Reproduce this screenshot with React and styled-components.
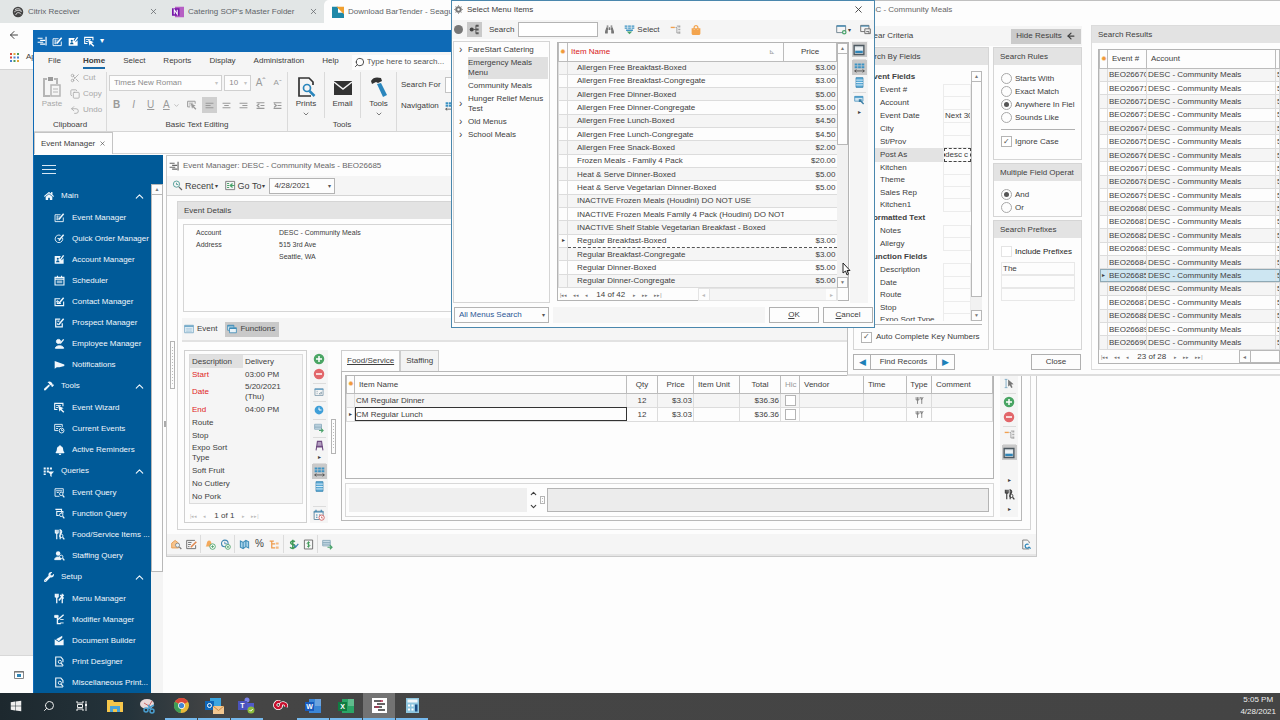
import React, { useState } from 'react';
import styled, { createGlobalStyle } from 'styled-components';
import { FaHome, FaHammer, FaWrench, FaBell, FaBinoculars, FaShoppingBag, FaWindows } from 'react-icons/fa';
import { Search, ArrowLeft, Undo2, Scissors, X, ChevronUp, ChevronDown, Copy } from 'lucide-react';

const FACE = '"Liberation Sans", Arial, sans-serif';
const SIZE = '8px';

/* ---------- data ---------- */

const navSections = [
  {
    title: 'Main',
    icon: 'home',
    items: [
      ['Event Manager', 'edit'],
      ['Quick Order Manager', 'quick'],
      ['Account Manager', 'account'],
      ['Scheduler', 'calendar'],
      ['Contact Manager', 'contact'],
      ['Prospect Manager', 'prospect'],
      ['Employee Manager', 'employee'],
      ['Notifications', 'horn'],
    ],
  },
  {
    title: 'Tools',
    icon: 'hammer',
    items: [
      ['Event Wizard', 'wizard'],
      ['Current Events', 'current'],
      ['Active Reminders', 'bell'],
    ],
  },
  {
    title: 'Queries',
    icon: 'funnelGrid',
    items: [
      ['Event Query', 'eventQuery'],
      ['Function Query', 'functionQuery'],
      ['Food/Service Items ...', 'foodQuery'],
      ['Staffing Query', 'staffQuery'],
    ],
  },
  {
    title: 'Setup',
    icon: 'wrench',
    items: [
      ['Menu Manager', 'menu'],
      ['Modifier Manager', 'modifier'],
      ['Document Builder', 'docBuilder'],
      ['Print Designer', 'pageSearch'],
      ['Miscellaneous Print...', 'pageSearch'],
    ],
  },
];

const menuItems = [
  ['Allergen Free Breakfast-Boxed', '$3.00'],
  ['Allergen Free Breakfast-Congregate', '$3.00'],
  ['Allergen Free Dinner-Boxed', '$5.00'],
  ['Allergen Free Dinner-Congregate', '$5.00'],
  ['Allergen Free Lunch-Boxed', '$4.50'],
  ['Allergen Free Lunch-Congregate', '$4.50'],
  ['Allergen Free Snack-Boxed', '$2.00'],
  ['Frozen Meals - Family 4 Pack', '$20.00'],
  ['Heat & Serve Dinner-Boxed', '$5.00'],
  ['Heat & Serve Vegetarian Dinner-Boxed', '$5.00'],
  ['INACTIVE Frozen Meals (Houdini) DO NOT USE', ''],
  ['INACTIVE Frozen Meals Family 4 Pack (Houdini) DO NOT', ''],
  ['INACTIVE Shelf Stable Vegetarian Breakfast - Boxed', ''],
  ['Regular Breakfast-Boxed', '$3.00'],
  ['Regular Breakfast-Congregate', '$3.00'],
  ['Regular Dinner-Boxed', '$5.00'],
  ['Regular Dinner-Congregate', '$5.00'],
];

const menuTree = [
  ['FareStart Catering', true],
  ['Emergency Meals Menu', false],
  ['Community Meals', false],
  ['Hunger Relief Menus Test', true],
  ['Old Menus', true],
  ['School Meals', true],
];

const functionFields = [
  ['Description', 'Delivery'],
  ['Start', '03:00 PM', true],
  ['Date', '5/20/2021 (Thu)', true],
  ['End', '04:00 PM', true],
  ['Route', ''],
  ['Stop', ''],
  ['Expo Sort Type', ''],
  ['Soft Fruit', ''],
  ['No Cutlery', ''],
  ['No Pork', ''],
];

const searchFields = [
  ['Event Fields'],
  ['Event #', ''],
  ['Account', ''],
  ['Event Date', 'Next 30'],
  ['City', ''],
  ['St/Prov', ''],
  ['Post As', 'desc c'],
  ['Kitchen', ''],
  ['Theme', ''],
  ['Sales Rep', ''],
  ['Kitchen1', ''],
  ['Formatted Text'],
  ['Notes', ''],
  ['Allergy', ''],
  ['Function Fields'],
  ['Description', ''],
  ['Date', ''],
  ['Route', ''],
  ['Stop', ''],
  ['Expo Sort Type', ''],
];

const eventNumbers = Array.from({ length: 21 }, (_, i) => `BEO${26670 + i}`);

/* ---------- icons ---------- */

const pen = <path d="M7 11l7-8.500" strokeWidth="2.200" />;
const lens = (
  <>
    <circle cx="10.500" cy="10" r="2.500" />
    <path d="M12.500 12l2.500 3" strokeWidth="1.800" />
  </>
);

const glyphs = {
  logo: <path d="M1 3.500h8M5 7h8M1 10h9M5 13h8M14.500 1v14" strokeWidth="1.800" />,
  edit: <><path d="M13.500 8v6h-12V4h8" /><path d="M3 7h6M3 9h5M3 11h4M5 5v7" strokeWidth=".8" />{pen}</>,
  quick: <><path d="M12.500 7a5.500 5.500 0 1 1-3-3.500M5 8h3" />{pen}</>,
  account: <><path d="M1 3h9l-2 3 3 3 3-3v8H1z" fill="currentColor" stroke="none" /><path d="M9 9l5-7" strokeWidth="2" /><circle cx="5.500" cy="7" r="1.500" fill="#005a98" stroke="none" /><path d="M3 12c0-4 5-4 5 0z" fill="#005a98" stroke="none" /></>,
  calendar: <><path d="M1.500 3.500h13v11h-13zM5 1v3M11 1v3M2 6h12" strokeWidth="1.600" /><path d="M4 8h8v4H4z" fill="currentColor" opacity=".6" stroke="none" /></>,
  contact: <><path d="M14 8v6H1.500V4H9M4 8.500h3M4 11h6" strokeWidth="1.600" />{pen}<circle cx="5" cy="8" r="1.200" /></>,
  prospect: <><path d="M12 9v5.500H2.500V3H9M5 6h3" strokeWidth="1.800" />{pen}<path d="M5 9v2h3" /></>,
  employee: <><path d="M2 15c0-5 12-5 12 0z" fill="currentColor" /><circle cx="6.500" cy="5" r="3" fill="currentColor" /><path d="M9 8l5-6" strokeWidth="2" /></>,
  horn: <path d="M1 3v11l3-2h4l7-2V8z" fill="currentColor" stroke="none" />,
  wizard: <><path d="M13 6V2H1v9h4" strokeWidth="1.600" /><path d="M3 5h7M3 8h3" /><path d="M6 5l8 4-3 1 4 4-1.500 1.500-4-4L8 14z" fill="currentColor" stroke="none" /></>,
  current: <><path d="M12 6V2H1v9h5M3 5h7M3 8h3" /><circle cx="11" cy="11" r="3.500" /><path d="M11 9v2h2" /></>,
  eventQuery: <><path d="M13.500 9V2.500h-12v11H8M3 5.500h9M4 8h3" />{lens}</>,
  functionQuery: <><path d="M2 2h9v5M4 4v7h3M4 5h9v3" strokeWidth="1.500" />{lens}</>,
  foodQuery: <><path d="M2 1v5M4 1v5M6 1v5M2 6h4M4 6v9" strokeWidth="1.700" /><path d="M9 15V1c3 1 3 5 0 6" strokeWidth="1.700" />{lens}</>,
  staffQuery: <><path d="M1 14c0-5 9-5 9 0z" fill="currentColor" /><circle cx="6" cy="5" r="3.200" fill="currentColor" stroke="none" />{lens}</>,
  menu: <><path d="M2 1v5M4 1v5M6 1v5M2 6h4M4 6v9M12 1v14M9 3l5 5" strokeWidth="1.900" />{pen}</>,
  modifier: <><path d="M1 2h5v3H1zM9 8h5M9 13h5" fill="currentColor" /><path d="M5 5v9h5M6 8l8-7" strokeWidth="2" /></>,
  docBuilder: <><path d="M1 6l6 4 7-4v9H1z" fill="currentColor" stroke="none" /><path d="M3 6l9-5v3L7 9z" fill="currentColor" stroke="none" /></>,
  pageSearch: <><path d="M13 14.500H2.500v-13H10L13 5v4" strokeWidth="1.600" /><circle cx="8.500" cy="8.500" r="2.300" /><path d="M10 10l3.500 4" strokeWidth="1.800" /></>,
  funnelGrid: <><path d="M1 2h3v3H1zM5.500 2h3v3h-3zM10 2h3v3h-3zM1 6.500h3v3H1zM5.500 6.500h3v3h-3zM1 11h3v2H1z" fill="currentColor" stroke="none" /><path d="M7 8h9l-3.500 4v4l-2-1.500V12z" fill="currentColor" stroke="none" /></>,
  recent: <><circle cx="6.500" cy="6" r="4.500" stroke="#4c9a94" /><path d="M6.500 4v2.500H9" stroke="#4c9a94" /><path d="M10 10l4.500 4.500" stroke="#666" strokeWidth="1.800" /></>,
  goTo: <><path d="M1 2h13v12H1z" stroke="#777" /><path d="M3 5h3M3 8h3M3 11h3" stroke="#4ba36b" strokeWidth="1.600" /><path d="M14 8H8M11 5L7.500 8l3.500 3" stroke="#4ba36b" strokeWidth="1.800" /></>,
  eventTab: <><path d="M1 2h14v12H1z" fill="#e6f1f8" stroke="#7aa9c4" /><path d="M1 3.500h14" stroke="#5a9cc2" strokeWidth="2" /><path d="M3 7h10M3 9.500h10M3 12h10M5 6v7M8 6v7M11 6v7" stroke="#9ec3d8" strokeWidth=".8" /></>,
  functionTab: <><path d="M1 2h10v8H1z" fill="#d8ebf5" stroke="#3f8db8" /><path d="M4 6h11v8H4z" fill="#e8f3f9" stroke="#3f8db8" /><path d="M4 7h11M1 3h10" stroke="#3f8db8" strokeWidth="2" /></>,
  plus: <><circle cx="8" cy="8" r="7" fill="#4aa564" stroke="none" /><path d="M8 4v8M4 8h8" stroke="#fff" strokeWidth="2" /></>,
  minus: <><circle cx="8" cy="8" r="7" fill="#e2666a" stroke="none" /><path d="M4 8h8" stroke="#fff" strokeWidth="2" /></>,
  form: <><path d="M1.500 3h13v10.500h-13z" stroke="#7b98aa" /><path d="M1 3.500h14" stroke="#5b9cc4" strokeWidth="2" /><path d="M4 7h2M4 10h2M8 11l4-3v3z" stroke="#8fa5b3" /></>,
  clock: <><circle cx="8" cy="8" r="7" fill="#3f9fd8" stroke="none" /><path d="M8 4v4h4" stroke="#fff" strokeWidth="1.600" /></>,
  gridArrow: <><path d="M1 2h11v8H1z" fill="#cfe0ea" stroke="#88a9bb" /><path d="M1 5h11M1 7.500h11" stroke="#88a9bb" /><path d="M8 12h6M11.500 9l3 3-3 3" stroke="#4ba36b" strokeWidth="1.800" /></>,
  chair: <path d="M5 2h6l1 7H4zM4 9l-1 6M12 9l1 6M3 10h10" stroke="#6f4c82" strokeWidth="1.600" fill="#b39dc0" />,
  columns: <><path d="M1 2h4v3H1zM6 2h4v3H6zM11 2h4v3h-4zM1 6h4v3H1zM6 6h4v3H6zM11 6h4v3h-4z" fill="#3c93c4" stroke="none" /><path d="M1 13h14M3.500 11L1 13l2.500 2M12.500 11l2.500 2-2.500 2" stroke="#444" strokeWidth="1.200" /></>,
  list: <><path d="M3 1h10v14H3z" fill="#5aaad6" stroke="#3f88b3" /><path d="M3 4.500h10M3 8h10M3 11.500h10" stroke="#e4f2fa" /></>,
  calClock: <><path d="M1.500 3h12v11h-12z" stroke="#6d8ea3" /><path d="M1 4h13M4 1v3M11 1v3" stroke="#3f88b3" strokeWidth="1.600" /><path d="M4 8h2M4 11h2M8 8h2" stroke="#3f88b3" strokeWidth="1.600" /><circle cx="11.500" cy="11.500" r="3.500" stroke="#d46a6a" fill="#fff" /><path d="M11.500 10v2h1.500" stroke="#d46a6a" /></>,
  tree: <><path d="M1 5h6" stroke="#f0a050" strokeWidth="2" /><path d="M8 5h2v8h2M10 3h2" stroke="#999" /><path d="M12 2h3v3h-3zM12 7h3v2h-3zM12 11h3v3h-3z" fill="#aaa" stroke="none" /></>,
  preview: <><path d="M1.500 2h13v12h-13z" fill="#d5dde2" stroke="#4c5860" strokeWidth="1.800" /><path d="M3 4.500h10v4H3z" fill="#eef2f4" stroke="none" /><path d="M3 10.500h10" stroke="#2f86b8" strokeWidth="3" /></>,
  cursorLine: <><path d="M3 2v12M1 2h4M1 14h4" stroke="#7aa9c4" /><path d="M6 2l8 7-3.500.5 2 4-2 1-2-4-2.500 2z" fill="#777" stroke="none" /></>,
  mailSearch: <><path d="M1 6l5-4 5 4v7H1z" fill="#f7c48d" stroke="#e59a4c" /><circle cx="9.500" cy="9" r="3" stroke="#888" fill="#e4f1f8" /><path d="M12 11.500l3 3" stroke="#777" strokeWidth="1.800" /></>,
  listEdit: <><path d="M14 9v5H1V2h12" stroke="#666" /><path d="M3 5h5M3 8h4M3 11h2" stroke="#666" /><path d="M7 12l8-8" stroke="#e08850" strokeWidth="2.200" /></>,
  bellPlus: <><path d="M1 11c2-2 1-9 5-9s3 7 5 9z" fill="#f3a95c" stroke="none" /><circle cx="11" cy="11" r="4" fill="#fff" stroke="#4ba36b" /><path d="M11 9v4M9 11h4" stroke="#4ba36b" /></>,
  clockPlus: <><circle cx="7" cy="6.500" r="4.800" stroke="#3f88b3" strokeWidth="1.600" /><path d="M7 4v3h3" stroke="#3f88b3" /><circle cx="11.500" cy="11.500" r="3.500" fill="#fff" stroke="#4ba36b" /><path d="M11.500 10v3M10 11.500h3" stroke="#4ba36b" /></>,
  map: <path d="M2 3l4 2 4-3 4 2v9l-4-2-4 3-4-2zM6 5v9M10 2v9" fill="#a5d2ea" stroke="#3f8db8" strokeWidth="1.500" />,
  orgTree: <><path d="M4 3v10h5M4 7h5M1 3h6" stroke="#ee9a4a" strokeWidth="1.800" /><path d="M10 5h4v3h-4zM10 11h4v3h-4z" fill="#f3b880" stroke="none" /></>,
  dollar: <><path d="M10 4C8 2 3 3 4 6s7 1 6 5-5 3-7 1M7 1v14" stroke="#3f9a58" strokeWidth="2.200" /><path d="M9 9l2 3 4-5" stroke="#3f88b3" strokeWidth="1.800" /></>,
  dollarBox: <><path d="M2 1.500h12v13H2z" stroke="#666" /><path d="M10 5.500C8 4 6 5 6 6.500s4 1.500 4 3-2.500 2-4 1M8 3.500v9" stroke="#3f9a58" strokeWidth="1.400" /></>,
  docSync: <><path d="M12 6V4L9 1.500H2.500v13H12" stroke="#777" /><path d="M11 8a3 3 0 1 0 1 3M14 14l-2-2" stroke="#2f86b8" strokeWidth="1.800" /></>,
  gridDown: <><path d="M1 2h4v2H1zM6 2h4v2H6zM11 2h4v2h-4zM1 5h4v2H1zM6 5h4v2H6zM11 5h4v2h-4zM3 8h10v2H3z" fill="#3c93c4" stroke="none" /><path d="M4 11h8l-4 4z" fill="#4ba36b" stroke="none" /></>,
  gridTool: <><path d="M1 2h12v7H1z" fill="#cfe5f1" stroke="#5b9cc4" /><path d="M1 3h12" stroke="#3c93c4" strokeWidth="2" /><path d="M8 7l6 6M8 10V7h3" stroke="#3c7fa6" strokeWidth="2" /></>,
  nodes: <><circle cx="4" cy="8" r="3" fill="#444" stroke="none" /><path d="M7 8h3M10 2v12" stroke="#555" /><path d="M10 1h4v3h-4zM10 6.500h4v3h-4zM10 12h4v3h-4z" fill="#555" stroke="none" /></>,
  windowPlus: <><path d="M1 2.500h13v8M1 2.500v10h8" stroke="#6a7f8c" /><path d="M1 3h13" stroke="#3f88b3" strokeWidth="2" /><circle cx="12" cy="12" r="2.500" stroke="#4ba36b" strokeWidth="1.800" /></>,
  windowSave: <><path d="M1 2h12v9H1z" stroke="#666" /><path d="M1 3h12" stroke="#3f88b3" strokeWidth="1.600" /><path d="M7 7h8v7H7z" fill="#eee" stroke="#666" /><path d="M9 11h4v3" stroke="#666" /></>,
  gear: <><circle cx="8" cy="8" r="4" strokeWidth="3.500" stroke="#777" /><path d="M8 0v3M8 13v3M0 8h3M13 8h3M2.500 2.500l2 2M11.500 11.500l2 2M2.500 13.500l2-2M11.500 4.500l2-2" stroke="#999" strokeWidth="1.600" /></>,
  forks: <path d="M2 2v5M4.500 2v12M7 2v5H2M12 14V2M9.500 2l2 5 3-5" stroke="#777" strokeWidth="1.500" />,
};

function Glyph({ name, size = 12 }) {
  return (
    <svg width={size} height={size} viewBox="0 0 16 16" fill="none" stroke="currentColor" strokeWidth="1.3">
      {glyphs[name]}
    </svg>
  );
}

const faIcons = { home: FaHome, hammer: FaHammer, wrench: FaWrench, bell: FaBell };

function NavIcon({ name }) {
  const Fa = faIcons[name];
  return (
    <NavIconSlot>
      {Fa ? <Fa size={10} /> : <Glyph name={name} size={11} />}
    </NavIconSlot>
  );
}

/* ---------- small shared parts ---------- */

function Pager({ text, faint }) {
  return (
    <PagerBar $faint={faint}>
      <button aria-label="First">|◂◂</button>
      {!faint && <button aria-label="Page up">◂◂</button>}
      <button aria-label="Previous">◂</button>
      <span>{text}</span>
      <button aria-label="Next">▸</button>
      {!faint && <button aria-label="Page down">▸▸</button>}
      <button aria-label="Last">▸▸|</button>
    </PagerBar>
  );
}

function VScroll({ thumb }) {
  return (
    <ScrollTrack>
      <ScrollButton aria-label="Scroll up">▲</ScrollButton>
      <ScrollThumb style={{ height: thumb }} />
      <ScrollButton aria-label="Scroll down" $last>▼</ScrollButton>
    </ScrollTrack>
  );
}

/* ---------- browser behind the application ---------- */

function Browser() {
  return (
    <BrowserWindow>
      <TabStrip>
        <BrowserTab>
          <svg width="12" height="12" viewBox="0 0 16 16">
            <circle cx="8" cy="8" r="7" fill="#444" />
            <path d="M4 5c3-2 6-2 8 1M3 8c3-3 8-3 10 0M5 12c1-4 5-4 7-1" stroke="#ddd" fill="none" strokeWidth="1.3" />
          </svg>
          <span>Citrix Receiver</span>
          <X size={9} />
        </BrowserTab>
        <BrowserTab>
          <svg width="12" height="12" viewBox="0 0 16 16">
            <path d="M4 1h12v14H4z" fill="#b65fc4" />
            <path d="M0 3h10v10H0z" fill="#7719aa" />
            <path d="M3 11V5l4 6V5" stroke="#fff" fill="none" strokeWidth="1.4" />
          </svg>
          <span>Catering SOP's Master Folder</span>
          <X size={9} />
        </BrowserTab>
        <BrowserTab $active>
          <svg width="12" height="12" viewBox="0 0 16 16">
            <path d="M0 1h8v8h8v7H0z" fill="#1e88a8" />
            <path d="M6 1h10v10z" fill="#f0a030" />
          </svg>
          <span>Download BarTender - Seagull</span>
        </BrowserTab>
      </TabStrip>
      <BrowserBar>
        <ArrowLeft size={12} color="#444" />
        <BookmarkRow>
          <svg width="9" height="9" viewBox="0 0 9 9">
            <path d="M0 0h2v2H0zM0 3.500h2v2H0z" fill="#d9483b" />
            <path d="M3.500 0h2v2h-2zM7 7h2v2H7z" fill="#e2a53a" />
            <path d="M7 0h2v2H7zM3.500 7h2v2h-2z" fill="#4a9c58" />
            <path d="M3.500 3.500h2v2h-2zM7 3.500h2v2H7zM0 7h2v2H0z" fill="#4a7fd0" />
          </svg>
          Apps
        </BookmarkRow>
      </BrowserBar>
      <BrowserPage />
      <BrowserShelf>
        <svg width="10" height="8" viewBox="0 0 10 8">
          <path d="M.5.5h9v7h-9z" fill="#fff" stroke="#888" />
          <path d="M0 1h10" stroke="#666" />
          <path d="M3 3h4v3H3z" fill="#2f86b8" />
        </svg>
      </BrowserShelf>
    </BrowserWindow>
  );
}

/* ---------- ribbon ---------- */

function Ribbon() {
  return (
    <header>
      <TitleBar>
        <Glyph name="logo" size={10} />
        <Glyph name="edit" size={11} />
        <Glyph name="account" size={11} />
        <Glyph name="wizard" size={11} />
        <i>▾</i>
      </TitleBar>
      <RibbonTabs>
        {['File', 'Home', 'Select', 'Reports', 'Display', 'Administration', 'Help'].map(tab => (
          <RibbonTab key={tab} $active={tab === 'Home'} $first={tab === 'File'}>
            {tab}
          </RibbonTab>
        ))}
        <RibbonSearch>
          <Search size={11} style={{ transform: 'scaleX(-1)' }} />
          <input aria-label="Search commands" placeholder="Type here to search..." />
        </RibbonSearch>
      </RibbonTabs>
      <RibbonBody>
        <RibbonGroup $width={73}>
          <ClipboardTools>
            <BigButton disabled>
              <svg width="20" height="22" viewBox="0 0 20 22" fill="none" stroke="#b5b5b5" strokeWidth="2">
                <path d="M8 20H2V3h3M12 3h3v5" />
                <path d="M6 1h5v4H6z" fill="#9a9a9a" stroke="none" />
                <path d="M9 9h9v11H9z" fill="#f5f5f5" strokeWidth="1.500" />
                <path d="M11 13h5M11 16h5" strokeWidth="1" />
              </svg>
              Paste
            </BigButton>
            <SmallStack>
              <button disabled><Scissors size={10} />Cut</button>
              <button disabled><Copy size={10} />Copy</button>
              <button disabled><Undo2 size={10} />Undo</button>
            </SmallStack>
          </ClipboardTools>
          <GroupName>Clipboard</GroupName>
        </RibbonGroup>
        <RibbonGroup $width={181}>
          <FontTools>
            <SelectBox $width={114} $pale>
              <select aria-label="Font" disabled><option>Times New Roman</option></select>
              <i>▾</i>
            </SelectBox>
            <SelectBox $width={27} $pale>
              <select aria-label="Font size" disabled><option>10</option></select>
              <i>▾</i>
            </SelectBox>
            <TextTool $size={10}>Aˆ</TextTool>
            <TextTool $size={8}>Aˇ</TextTool>
          </FontTools>
          <FormatTools>
            <TextTool $size={10}><b>B</b></TextTool>
            <TextTool $size={10}><em>I</em></TextTool>
            <TextTool $size={10}><u>U</u></TextTool>
            <TextTool $size={10} $wide><u>A</u><ChevronDown size={7} /></TextTool>
            <TextTool aria-label="Styles"><Glyph name="wizard" size={10} /></TextTool>
            {['M1 4h14M1 8h9M1 12h14', 'M1 4h14M4 8h8M1 12h14', 'M1 4h14M6 8h9M1 12h14', 'M1 3h14M8 8h7M1 13h14M6 5L2 8l4 3', 'M1 3h14M8 8h7M1 13h14M2 5l4 3-4 3'].map((d, i) => (
              <TextTool key={d} $on={i === 0} aria-label="Paragraph">
                <svg width="9" height="9" viewBox="0 0 16 16" stroke="#999" strokeWidth="2" fill="none"><path d={d} /></svg>
              </TextTool>
            ))}
          </FormatTools>
          <GroupName>Basic Text Editing</GroupName>
        </RibbonGroup>
        <RibbonGroup $width={109}>
          <BigTools>
            <BigButton>
              <svg width="20" height="22" viewBox="0 0 20 22" fill="none" stroke="#333" strokeWidth="1.700">
                <path d="M17 9V6l-4-4H3v18h12" />
                <circle cx="11" cy="12" r="3.500" stroke="#2a86bd" />
                <path d="M13.500 15l5 5" stroke="#2a86bd" strokeWidth="2.500" />
              </svg>
              Prints
              <ChevronDown size={8} />
            </BigButton>
            <BigButton>
              <svg width="20" height="22" viewBox="0 0 20 22">
                <path d="M1 5h18v14H1z" fill="#333" />
                <path d="M1 6l9 7 9-7" stroke="#f5f5f5" strokeWidth="1.500" fill="none" />
              </svg>
              Email
            </BigButton>
            <BigButton>
              <svg width="20" height="22" viewBox="0 0 20 22">
                <path d="M2 5c2-4 6-4 10-3l1 3-4 2-2-1-4 2z" fill="#333" />
                <path d="M8 8l4-1 6 12-4 2z" fill="#2a86bd" />
              </svg>
              Tools
              <ChevronDown size={8} />
            </BigButton>
          </BigTools>
          <GroupName>Tools</GroupName>
        </RibbonGroup>
        <SearchTools>
          <label htmlFor="search-for">Search For</label>
          <input id="search-for" />
          <span>Navigation</span>
          <Glyph name="columns" size={10} />
        </SearchTools>
      </RibbonBody>
      <DocTabs>
        <DocTab>
          Event Manager <X size={7} />
        </DocTab>
      </DocTabs>
    </header>
  );
}

/* ---------- left navigation ---------- */

function Sidebar() {
  return (
    <SidebarWrapper>
      <MenuButton aria-label="Toggle navigation">
        <span />
        <span />
        <span />
      </MenuButton>
      <SidebarBody>
        <NavList>
          {navSections.map(section => (
            <div key={section.title}>
              <NavHeader>
                <NavIcon name={section.icon} />
                <span>{section.title}</span>
                <ChevronUp size={13} />
              </NavHeader>
              {section.items.map(([label, icon]) => (
                <NavItem key={label} href="#">
                  <NavIcon name={icon} />
                  <span>{label}</span>
                </NavItem>
              ))}
            </div>
          ))}
        </NavList>
        <SidebarScroll>
          <ScrollButton aria-label="Scroll up">▲</ScrollButton>
          <ScrollThumb style={{ height: '74%' }} />
        </SidebarScroll>
      </SidebarBody>
    </SidebarWrapper>
  );
}

/* ---------- event manager window ---------- */

function ItemRow({ name, current }) {
  return (
    <tr>
      <td>{current ? '▸' : ''}</td>
      <NameCell $current={current}>{name}</NameCell>
      <td align="center">12</td>
      <td align="right">$3.03</td>
      <td />
      <td align="right">$36.36</td>
      <td align="center"><CheckBox type="checkbox" aria-label="Hide" /></td>
      <td />
      <td />
      <td align="center"><Glyph name="forks" size={9} /></td>
      <td />
    </tr>
  );
}

function EventWindow() {
  return (
    <EventFrame>
      <WindowTitle>
        <Glyph name="logo" size={10} />
        Event Manager: DESC - Community Meals - BEO26685
      </WindowTitle>
      <EventToolbar>
        <ToolButton $large><Glyph name="recent" size={11} />Recent<i>▾</i></ToolButton>
        <ToolButton $large><Glyph name="goTo" size={11} />Go To<i>▾</i></ToolButton>
        <SelectBox $width={66}>
          <select aria-label="Date"><option>4/28/2021</option></select>
          <i>▾</i>
        </SelectBox>
      </EventToolbar>
      <EventBody>
        <Gutter><Splitter $height={48} /></Gutter>
        <EventPanel>
          <PanelHeader>Event Details</PanelHeader>
          <Details>
            <dt>Account</dt>
            <dd>DESC - Community Meals</dd>
            <dt>Address</dt>
            <dd>515 3rd Ave<br />Seattle, WA</dd>
          </Details>
          <ViewTabs>
            <ViewTab><Glyph name="eventTab" size={10} />Event</ViewTab>
            <ViewTab $active><Glyph name="functionTab" size={10} />Functions</ViewTab>
          </ViewTabs>
          <FunctionRow>
            <FunctionCard>
              <FunctionTable>
                <tbody>
                  {functionFields.map(([label, value, required], i) => (
                    <tr key={label}>
                      <FunctionLabel $required={required} $picked={i === 0}>{label}</FunctionLabel>
                      <td>{value}</td>
                    </tr>
                  ))}
                </tbody>
              </FunctionTable>
              <Pager text="1 of 1" faint />
            </FunctionCard>
            <ToolColumn>
              <IconButton aria-label="Add"><Glyph name="plus" /></IconButton>
              <IconButton aria-label="Remove"><Glyph name="minus" /></IconButton>
              <IconButton aria-label="Form" $line><Glyph name="form" size={10} /></IconButton>
              <IconButton aria-label="Time" $line><Glyph name="clock" size={10} /></IconButton>
              <IconButton aria-label="Export" $line><Glyph name="gridArrow" size={10} /></IconButton>
              <IconButton aria-label="Seating" $line><Glyph name="chair" size={11} /></IconButton>
              <TinyArrow>▸</TinyArrow>
              <IconButton aria-label="Columns" $on $line><Glyph name="columns" size={11} /></IconButton>
              <IconButton aria-label="List"><Glyph name="list" size={11} /></IconButton>
              <Spacer />
              <IconButton aria-label="Schedule" $line><Glyph name="calClock" size={12} /></IconButton>
            </ToolColumn>
            <Splitter $height={35} />
            <ItemsArea>
              <ItemTabs>
                <ItemTab $active>Food/Service</ItemTab>
                <ItemTab>Staffing</ItemTab>
              </ItemTabs>
              <ItemsFrame>
                <ItemsMain>
                  <GridBox>
                    <ItemsTable>
                      <colgroup>
                        <col width="8" /><col /><col width="31" /><col width="36" /><col width="46" /><col width="41" />
                        <col width="19" /><col width="64" /><col width="43" /><col width="25" /><col width="61" />
                      </colgroup>
                      <thead>
                        <tr>
                          <th><Star>✹</Star></th>
                          <th>Item Name</th>
                          <th>Qty</th>
                          <th>Price</th>
                          <th>Item Unit</th>
                          <th>Total</th>
                          <th>Hic</th>
                          <th>Vendor</th>
                          <th>Time</th>
                          <th>Type</th>
                          <th>Comment</th>
                        </tr>
                      </thead>
                      <tbody>
                        <ItemRow name="CM Regular Dinner" />
                        <ItemRow name="CM Regular Lunch" current />
                      </tbody>
                    </ItemsTable>
                  </GridBox>
                  <NotesRow>
                    <NoteBox aria-label="Notes" $side />
                    <Spinner>
                      <ChevronUp size={9} strokeWidth={3} />
                      <ChevronDown size={9} strokeWidth={3} />
                    </Spinner>
                    <Splitter $height={8} />
                    <NoteBox aria-label="Item notes" />
                  </NotesRow>
                </ItemsMain>
                <ToolColumn>
                  <IconButton aria-label="Pick"><Glyph name="cursorLine" size={11} /></IconButton>
                  <IconButton aria-label="Add" $line><Glyph name="plus" size={12} /></IconButton>
                  <IconButton aria-label="Remove"><Glyph name="minus" size={12} /></IconButton>
                  <IconButton aria-label="Tree" $line><Glyph name="tree" size={11} /></IconButton>
                  <IconButton aria-label="Preview" $on $line><Glyph name="preview" size={12} /></IconButton>
                  <FoodTools>
                    <TinyArrow>▸</TinyArrow>
                    <IconButton aria-label="Find food"><Glyph name="foodQuery" size={11} /></IconButton>
                    <TinyArrow>▸</TinyArrow>
                  </FoodTools>
                </ToolColumn>
              </ItemsFrame>
            </ItemsArea>
          </FunctionRow>
        </EventPanel>
      </EventBody>
      <FooterTools>
        <IconButton aria-label="Find mail"><Glyph name="mailSearch" size={11} /></IconButton>
        <IconButton aria-label="Edit list"><Glyph name="listEdit" size={11} /></IconButton>
        <ToolDivider />
        <IconButton aria-label="Add reminder"><Glyph name="bellPlus" size={11} /></IconButton>
        <IconButton aria-label="Add history"><Glyph name="clockPlus" size={11} /></IconButton>
        <ToolDivider />
        <IconButton aria-label="Map"><Glyph name="map" size={11} /></IconButton>
        <PercentButton>%</PercentButton>
        <IconButton aria-label="Hierarchy"><Glyph name="orgTree" size={11} /></IconButton>
        <ToolDivider />
        <IconButton aria-label="Approve"><Glyph name="dollar" size={11} /></IconButton>
        <IconButton aria-label="Payment"><Glyph name="dollarBox" size={11} /></IconButton>
        <ToolDivider />
        <IconButton aria-label="Export"><Glyph name="gridArrow" size={11} /></IconButton>
        <Spacer />
        <IconButton aria-label="Refresh document"><Glyph name="docSync" size={11} /></IconButton>
      </FooterTools>
    </EventFrame>
  );
}

/* ---------- search window ---------- */

function SearchWindow() {
  const [rule, setRule] = useState('Anywhere In Fiel');
  const [join, setJoin] = useState('And');

  return (
    <SearchFrame>
      <SearchTitle>DESC - Community Meals</SearchTitle>
      <SearchBody>
        <SearchLeft>
          <CriteriaBar>
            <button>Clear Criteria</button>
            <HideButton>Hide Results <ArrowLeft size={10} strokeWidth={3} /></HideButton>
          </CriteriaBar>
          <CriteriaRow>
            <FieldsPanel>
              <PanelHeader>Search By Fields</PanelHeader>
              <FieldsScroll>
                <FieldsClip>
                  <FieldsTable>
                    <colgroup>
                      <col />
                      <col width="27" />
                    </colgroup>
                    <tbody>
                      {searchFields.map(([label, value]) => (
                        <FieldRow key={label + value} $picked={label === 'Post As'}>
                          {value === undefined ? <th colSpan="2">{label}</th> : <td>{label}</td>}
                          {value !== undefined && <td>{value}</td>}
                        </FieldRow>
                      ))}
                    </tbody>
                  </FieldsTable>
                </FieldsClip>
                <VScroll thumb="215px" />
              </FieldsScroll>
              <CheckLine>
                <CheckBox type="checkbox" defaultChecked />
                Auto Complete Key Numbers
              </CheckLine>
            </FieldsPanel>
            <RulesColumn>
              <RulePanel $height={113}>
                <PanelHeader>Search Rules</PanelHeader>
                <RuleList>
                  {['Starts With', 'Exact Match', 'Anywhere In Fiel', 'Sounds Like'].map(text => (
                    <RuleLabel key={text}>
                      <Radio type="radio" name="rule" checked={rule === text} onChange={() => setRule(text)} />
                      {text}
                    </RuleLabel>
                  ))}
                  <hr />
                  <RuleLabel>
                    <CheckBox type="checkbox" defaultChecked />
                    Ignore Case
                  </RuleLabel>
                </RuleList>
              </RulePanel>
              <RulePanel $height={54}>
                <PanelHeader>Multiple Field Operat</PanelHeader>
                <RuleList>
                  {['And', 'Or'].map(text => (
                    <RuleLabel key={text}>
                      <Radio type="radio" name="join" checked={join === text} onChange={() => setJoin(text)} />
                      {text}
                    </RuleLabel>
                  ))}
                </RuleList>
              </RulePanel>
              <RulePanel>
                <PanelHeader>Search Prefixes</PanelHeader>
                <RuleList>
                  <RuleLabel $dark>
                    <CheckBox type="checkbox" $pale />
                    Include Prefixes
                  </RuleLabel>
                  <PrefixInput aria-label="Prefix 1" defaultValue="The" />
                  <PrefixInput aria-label="Prefix 2" />
                  <PrefixInput aria-label="Prefix 3" />
                </RuleList>
              </RulePanel>
            </RulesColumn>
          </CriteriaRow>
          <SearchButtons>
            <PushButton $width={18} aria-label="Previous"><Triangle>◀</Triangle></PushButton>
            <PushButton $width={66} $joined>Find Records</PushButton>
            <PushButton $width={18} $joined aria-label="Next"><Triangle>▶</Triangle></PushButton>
            <Spacer />
            <PushButton $width={50}>Close</PushButton>
          </SearchButtons>
        </SearchLeft>
        <Results>
          <PanelHeader>Search Results</PanelHeader>
          <ResultsBox>
            <ResultsTable>
              <colgroup>
                <col width="8" /><col width="39" /><col width="129" /><col />
              </colgroup>
              <thead>
                <tr>
                  <th><Star>✹</Star></th>
                  <th>Event #</th>
                  <th>Account</th>
                  <th />
                </tr>
              </thead>
              <tbody>
                {eventNumbers.map(num => (
                  <ResultRow key={num} $picked={num === 'BEO26685'}>
                    <td>{num === 'BEO26685' ? '▸' : ''}</td>
                    <td>{num}</td>
                    <td>DESC - Community Meals</td>
                    <td>5</td>
                  </ResultRow>
                ))}
              </tbody>
            </ResultsTable>
            <PagerRow>
              <Pager text="23 of 28" />
              <HScroll><button aria-label="Scroll left">◂</button></HScroll>
            </PagerRow>
          </ResultsBox>
        </Results>
      </SearchBody>
    </SearchFrame>
  );
}

/* ---------- select menu items dialog ---------- */

function MenuDialog() {
  return (
    <DialogFrame role="dialog" aria-label="Select Menu Items">
      <DialogTitle>
        <Glyph name="gear" size={9} />
        <span>Select Menu Items</span>
        <button aria-label="Close"><X size={11} /></button>
      </DialogTitle>
      <DialogTools>
        <Dot />
        <IconButton aria-label="Tree view" $on><Glyph name="nodes" size={11} /></IconButton>
        <label htmlFor="menu-search">Search</label>
        <input id="menu-search" />
        <ToolButton aria-label="Find"><FaBinoculars size={9} color="#777" /></ToolButton>
        <ToolButton><Glyph name="gridDown" size={11} />Select</ToolButton>
        <ToolButton aria-label="Tree"><Glyph name="tree" size={11} /></ToolButton>
        <ToolButton aria-label="Bag"><FaShoppingBag size={10} color="#f3a44e" /></ToolButton>
        <Spacer />
        <ToolButton aria-label="New window"><Glyph name="windowPlus" size={11} /><i>▾</i></ToolButton>
        <IconButton aria-label="Save layout"><Glyph name="windowSave" size={11} /></IconButton>
      </DialogTools>
      <DialogBody>
        <MenuTree>
          {menuTree.map(([label, branch]) => (
            <TreeRow key={label}>
              <i>{branch ? '›' : ''}</i>
              <TreeLabel $picked={label === 'Emergency Meals Menu'}>{label}</TreeLabel>
            </TreeRow>
          ))}
        </MenuTree>
        <MenuGrid>
          <MenuScroll>
            <MenuRows>
              <MenuTable>
                <colgroup>
                  <col width="9" /><col /><col width="53" />
                </colgroup>
                <thead>
                  <tr>
                    <th><Star>✹</Star></th>
                    <RedHead>Item Name <small>⊾</small></RedHead>
                    <th>Price</th>
                  </tr>
                </thead>
                <tbody>
                  {menuItems.map(([name, price]) => (
                    <MenuRow key={name} $focused={name === 'Regular Breakfast-Boxed'}>
                      <td>{name === 'Regular Breakfast-Boxed' ? '▸' : ''}</td>
                      <td>{name}</td>
                      <td align="right">{price}</td>
                    </MenuRow>
                  ))}
                </tbody>
              </MenuTable>
            </MenuRows>
            <VScroll thumb="91px" />
          </MenuScroll>
          <PagerRow>
            <Pager text="14 of 42" />
            <HScroll $faint><button aria-label="Scroll left">◂</button><button aria-label="Scroll right">▸</button></HScroll>
          </PagerRow>
        </MenuGrid>
        <ToolColumn>
          <IconButton aria-label="Preview" $on><Glyph name="preview" size={12} /></IconButton>
          <IconButton aria-label="Columns" $on $line><Glyph name="columns" size={11} /></IconButton>
          <IconButton aria-label="List"><Glyph name="list" size={11} /></IconButton>
          <IconButton aria-label="Customize" $line><Glyph name="gridTool" size={11} /></IconButton>
          <TinyArrow>▸</TinyArrow>
        </ToolColumn>
      </DialogBody>
      <DialogFooter>
        <SelectBox $width={95} $blue>
          <select aria-label="Menu search"><option>All Menus Search</option></select>
          <i>▾</i>
        </SelectBox>
        <FooterStrip />
        <PushButton $width={50}><u>O</u>K</PushButton>
        <PushButton $width={50}><u>C</u>ancel</PushButton>
      </DialogFooter>
    </DialogFrame>
  );
}

/* ---------- taskbar ---------- */

function OfficeIcon({ letter, color, light }) {
  return (
    <svg width="17" height="16" viewBox="0 0 17 16">
      <path d="M4 1h12v14H4z" fill={light} />
      <path d="M10 1h6v7h-6z" fill="#fff" opacity=".25" />
      <path d="M0 4h9v9H0z" fill={color} />
      <text x="4.500" y="11" textAnchor="middle" fontSize="7" fontWeight="700" fill="#fff">{letter}</text>
    </svg>
  );
}

function Taskbar() {
  return (
    <TaskbarWrapper>
      <TaskButton aria-label="Start"><FaWindows size={12} /></TaskButton>
      <TaskButton aria-label="Search"><Search size={12} style={{ transform: 'scaleX(-1)' }} /></TaskButton>
      <TaskButton aria-label="Task view">
        <svg width="12" height="12" viewBox="0 0 12 12" fill="none" stroke="#eee">
          <path d="M1 1v2h6V1M1 11V9h6v2M1.500 4.500h5v3h-5zM10 1v10" />
          <path d="M9 4h2v2H9z" fill="#eee" stroke="none" />
        </svg>
      </TaskButton>
      <TaskButton aria-label="File Explorer">
        <svg width="16" height="14" viewBox="0 0 16 14">
          <path d="M0 1h6l1 2h9v10H0z" fill="#f5c64b" />
          <path d="M3 7h10v6H3z" fill="#4aa3d8" />
          <path d="M6 10h4v3H6z" fill="#f5c64b" />
        </svg>
      </TaskButton>
      <TaskButton aria-label="Snip">
        <svg width="16" height="16" viewBox="0 0 16 16">
          <ellipse cx="7" cy="6" rx="7" ry="5" fill="#ead9d9" />
          <path d="M4 5l5 3 3-5" stroke="#c66" fill="none" />
          <circle cx="6" cy="12" r="2" stroke="#4a9fd0" strokeWidth="1.500" fill="none" />
          <circle cx="12" cy="13" r="2" stroke="#4a9fd0" strokeWidth="1.500" fill="none" />
          <path d="M7 11l7-4M11 11L8 7" stroke="#4a9fd0" strokeWidth="1.500" />
        </svg>
      </TaskButton>
      <TaskButton aria-label="Chrome" $open>
        <svg width="15" height="15" viewBox="0 0 16 16">
          <circle cx="8" cy="8" r="8" fill="#e8b93a" />
          <path d="M8 8L1 4a8 8 0 0 1 14 0z" fill="#d9483b" />
          <path d="M8 8L1 4a8 8 0 0 0 6 12z" fill="#3f9d57" />
          <circle cx="8" cy="8" r="3.600" fill="#fff" />
          <circle cx="8" cy="8" r="2.800" fill="#4285d8" />
        </svg>
      </TaskButton>
      <TaskButton aria-label="Outlook" $open>
        <svg width="19" height="17" viewBox="0 0 19 17">
          <path d="M5 1h11v11H5z" fill="#3ba5e0" />
          <path d="M0 4h9v9H0z" fill="#0f66b8" />
          <circle cx="4.500" cy="8.500" r="2" stroke="#fff" fill="none" />
          <path d="M8 9h11v8H8z" fill="#f3c790" />
          <path d="M8 9l5.500 4.500L19 9" stroke="#c98b45" fill="none" />
        </svg>
      </TaskButton>
      <TaskButton aria-label="Teams" $open>
        <svg width="18" height="17" viewBox="0 0 18 17">
          <circle cx="9" cy="3" r="2.500" fill="#7b83eb" />
          <path d="M6 6h10v7H6z" fill="#5059c9" />
          <path d="M0 4h9v9H0z" fill="#4b53bc" />
          <text x="4.500" y="11" textAnchor="middle" fontSize="7" fontWeight="700" fill="#fff">T</text>
          <circle cx="13" cy="13" r="3.500" fill="#8cbd3c" />
          <path d="M11.500 13l1.200 1.200 2-2.200" stroke="#fff" fill="none" />
        </svg>
      </TaskButton>
      <TaskButton aria-label="Citrix">
        <svg width="15" height="12" viewBox="0 0 15 12" fill="none" stroke="#fff" strokeWidth="4">
          <path d="M7 2C3 1 1 5 3 7s5 1 5-2 6-2 5 2" />
          <path d="M7 2C3 1 1 5 3 7s5 1 5-2 6-2 5 2" stroke="#c8102e" strokeWidth="2.500" />
        </svg>
      </TaskButton>
      <TaskButton aria-label="Word" $open><OfficeIcon letter="W" color="#185abd" light="#3b86d6" /></TaskButton>
      <TaskButton aria-label="Excel" $open><OfficeIcon letter="X" color="#107c41" light="#2ba567" /></TaskButton>
      <TaskButton aria-label="Catering" $open $current>
        <svg width="15" height="15" viewBox="0 0 15 15">
          <path d="M0 0h15v15H0z" fill="#fff" />
          <path d="M2 3h7M5 6h8M2 9h8M6 12h7" stroke="#333" strokeWidth="1.500" />
          <path d="M8 3h3M3 9h4" stroke="#b03050" strokeWidth="1.500" />
        </svg>
      </TaskButton>
      <TaskButton aria-label="Calculator" $open>
        <svg width="13" height="15" viewBox="0 0 13 15">
          <path d="M0 0h13v15H0z" fill="#8ec5de" />
          <path d="M1.500 1.500h10v3h-10z" fill="#f2f7fa" />
          <path d="M2 6.500h2v2H2zM5.500 6.500h2v2h-2zM2 10.500h2v2H2zM5.500 10.500h2v2h-2z" fill="#fff" />
          <path d="M9 6.500h2.500v7H9z" fill="#1b4f86" />
        </svg>
      </TaskButton>
      <Clock>
        <span>5:05 PM</span>
        <span>4/28/2021</span>
      </Clock>
    </TaskbarWrapper>
  );
}

export default function App() {
  return (
    <Desktop>
      <GlobalStyle />
      <Screen>
        <Browser />
        <AppWindow>
          <Ribbon />
          <Workspace>
            <Sidebar />
            <WorkSplitter />
            <EventWindow />
          </Workspace>
        </AppWindow>
        <SearchWindow />
        <MenuDialog />
        <Pointer width="9" height="14" viewBox="0 0 9 14">
          <path d="M1 1v10l2.500-2 1.500 4 1.500-.8L5 8.500h3z" fill="#fff" stroke="#222" />
        </Pointer>
      </Screen>
      <Taskbar />
    </Desktop>
  );
}

/* ---------- styles ---------- */

const GlobalStyle = createGlobalStyle`
  * {
    box-sizing: border-box;
  }
  body {
    margin: 0;
    font-family: ${FACE};
    font-size: ${SIZE};
    line-height: 12px;
    color: #404040;
    overflow: hidden;
  }
  button, input, select, textarea {
    font: inherit;
    color: inherit;
    padding: 0;
    margin: 0;
    border: 0;
    background: none;
    border-radius: 0;
    min-width: 0;
    white-space: nowrap;
  }
  svg {
    flex-shrink: 0;
  }
  i {
    font-style: normal;
  }
`;

const Desktop = styled.div`
  display: flex;
  flex-direction: column;
  height: 100vh;
`;

const Screen = styled.div`
  position: relative;
  flex: 1;
  min-height: 0;
  overflow: hidden;
  background: #fdfdfd;
`;

const BrowserWindow = styled.div`
  display: flex;
  flex-direction: column;
  height: 100%;
`;

const TabStrip = styled.div`
  display: flex;
  height: 23px;
  background: #e2e6e6;
  padding-left: 4px;
`;

const BrowserTab = styled.div`
  display: flex;
  align-items: center;
  gap: 4px;
  width: 160px;
  padding: 0 6px 0 8px;
  color: #606468;
  background: ${({ $active }) => ($active ? '#fdfdfd' : 'none')};
  border-radius: 5px 5px 0 0;
  white-space: nowrap;
  span {
    flex: 1;
  }
`;

const BrowserBar = styled.div`
  display: flex;
  flex-direction: column;
  gap: 10px;
  height: 46px;
  padding: 6px 0 0 8px;
  background: #fdfdfd;
`;

const BookmarkRow = styled.div`
  display: flex;
  align-items: center;
  gap: 7px;
  padding-left: 2px;
`;

const BrowserPage = styled.div`
  flex: 1;
  background: #e8e8e8;
  border-top: 1px solid #d4d4d4;
`;

const BrowserShelf = styled.div`
  height: 38px;
  padding: 15px 14px;
  background: #fdfdfd;
  border-top: 1px solid #d8d8d8;
`;

const AppWindow = styled.div`
  position: absolute;
  inset: 30px 0 0 33px;
  display: flex;
  flex-direction: column;
  background: #fdfdfd;
  border-left: 1px solid #0e6ab6;
`;

const TitleBar = styled.div`
  display: flex;
  align-items: center;
  gap: 5px;
  height: 22px;
  padding-left: 3px;
  background: #0e6ab6;
  color: #fff;
`;

const RibbonTabs = styled.div`
  display: flex;
  align-items: center;
  height: 20px;
  padding-left: 5px;
  background: #f5f5f5;
`;

const RibbonTab = styled.button`
  height: 17px;
  margin-right: ${({ $first }) => ($first ? '4px' : '0')};
  padding: 0 9px;
  font-weight: ${({ $active }) => ($active ? 700 : 400)};
  &::after {
    content: '';
    display: block;
    height: 2px;
    background: ${({ $active }) => ($active ? '#1a6aa8' : 'none')};
  }
`;

const RibbonSearch = styled.label`
  display: flex;
  align-items: center;
  gap: 2px;
  width: 140px;
  height: 15px;
  padding-left: 2px;
  margin-left: 4px;
  background: #fdfdfd;
  input {
    width: 100%;
  }
  input::placeholder {
    color: #555;
  }
`;

const RibbonBody = styled.div`
  display: flex;
  height: 60px;
  background: #f5f5f5;
  border-bottom: 1px solid #d5d5d5;
`;

const RibbonGroup = styled.div`
  display: flex;
  flex-direction: column;
  width: ${({ $width }) => $width}px;
  border-right: 1px solid #dadada;
`;

const GroupName = styled.div`
  margin-top: auto;
  text-align: center;
`;

const ClipboardTools = styled.div`
  display: flex;
  gap: 6px;
  padding: 0 0 0 6px;
`;

const BigTools = styled.div`
  display: flex;
  > * + * {
    border-left: 1px solid #dadada;
  }
`;

const BigButton = styled.button`
  display: flex;
  flex-direction: column;
  align-items: center;
  width: ${({ disabled }) => (disabled ? '24px' : '36px')};
  padding-top: 4px;
  color: ${({ disabled }) => (disabled ? '#a8a8a8' : '#404040')};
`;

const SmallStack = styled.div`
  display: flex;
  flex-direction: column;
  gap: 4px;
  color: #a8a8a8;
  button {
    display: flex;
    align-items: center;
    gap: 3px;
  }
`;

const FontTools = styled.div`
  display: flex;
  align-items: center;
  gap: 2px;
  padding: 3px 2px 0;
`;

const FormatTools = styled.div`
  display: flex;
  align-items: center;
  justify-content: space-between;
  padding: 6px 2px 0;
`;

const TextTool = styled.button`
  width: ${({ $wide }) => ($wide ? '22px' : '15px')};
  height: 16px;
  font-size: ${({ $size }) => $size || 10}px;
  color: #9a9a9a;
  background: ${({ $on }) => ($on ? '#cfcfcf' : 'none')};
  display: flex;
  align-items: center;
  justify-content: center;
  gap: 3px;
`;

const SelectBox = styled.div`
  display: flex;
  align-items: center;
  width: ${({ $width }) => $width}px;
  height: 16px;
  padding: 0 3px 0 2px;
  border: 1px solid ${({ $pale }) => ($pale ? '#d0d0d0' : '#b4b4b4')};
  background: #fdfdfd;
  color: ${({ $pale, $blue }) => ($blue ? '#2c5896' : $pale ? '#8c8c8c' : '#404040')};
  select {
    appearance: none;
    flex: 1;
    padding-left: 2px;
    opacity: 1;
  }
  i {
    font-size: 6px;
    color: ${({ $pale }) => ($pale ? '#c4c4c4' : '#555')};
  }
`;

const SearchTools = styled.div`
  display: grid;
  grid-template-columns: 42px 60px;
  grid-auto-rows: 21px;
  align-items: center;
  column-gap: 2px;
  padding: 2px 0 0 4px;
  white-space: nowrap;
  input {
    height: 16px;
    border: 1px solid #c4c4c4;
    background: #fff;
  }
`;

const DocTabs = styled.div`
  height: 22px;
  border-bottom: 1px solid #d5d5d5;
`;

const DocTab = styled.div`
  display: flex;
  align-items: center;
  justify-content: space-between;
  width: 79px;
  height: 22px;
  padding: 0 6px;
  border: 1px solid #c4c4c4;
  border-bottom: 0;
  background: #fdfdfd;
  white-space: nowrap;
`;

const Workspace = styled.div`
  display: flex;
  flex: 1;
  min-height: 0;
  padding-top: 1px;
`;

const SidebarWrapper = styled.nav`
  display: flex;
  flex-direction: column;
  width: 129px;
  background: #005a98;
  color: #f0f7fc;
`;

const MenuButton = styled.button`
  display: flex;
  flex-direction: column;
  gap: 3px;
  width: 30px;
  height: 29px;
  padding: 10px 8px;
  span {
    height: 1px;
    background: #d8e8f4;
  }
`;

const SidebarBody = styled.div`
  display: flex;
  flex: 1;
  min-height: 0;
`;

const NavList = styled.div`
  flex: 1;
  overflow: hidden;
  padding-top: 1px;
`;

const NavIconSlot = styled.span`
  display: flex;
  justify-content: center;
  width: 11px;
`;

const NavHeader = styled.button`
  display: flex;
  align-items: center;
  gap: 7px;
  width: 100%;
  height: 22px;
  padding: 0 5px 0 9px;
  > span + span {
    flex: 1;
    text-align: left;
  }
`;

const NavItem = styled.a`
  display: flex;
  align-items: center;
  gap: 7px;
  height: 21px;
  padding-left: 20px;
  color: inherit;
  text-decoration: none;
  white-space: nowrap;
`;

const SidebarScroll = styled.div`
  display: flex;
  flex-direction: column;
  width: 12px;
  background: #f4f4f4;
`;

const ScrollTrack = styled.div`
  display: flex;
  flex-direction: column;
  width: 11px;
  background: #f1f1f1;
`;

const ScrollButton = styled.button`
  height: 11px;
  border: 1px solid #b8b8b8;
  background: #fdfdfd;
  font-size: 5px;
  line-height: 9px;
  color: #777;
  margin-top: ${({ $last }) => ($last ? 'auto' : '0')};
`;

const ScrollThumb = styled.div`
  background: #fdfdfd;
  border: 1px solid #b8b8b8;
  border-top: 0;
`;

const WorkSplitter = styled.div`
  width: 3px;
  background: linear-gradient(#aaa, #aaa) center / 2px 6px no-repeat;
`;

const EventFrame = styled.div`
  display: flex;
  flex-direction: column;
  flex: 1;
  height: 402px;
  margin-right: 243px;
  border: 1px solid #c9c9c9;
  background: #fdfdfd;
`;

const WindowTitle = styled.div`
  display: flex;
  align-items: center;
  gap: 4px;
  height: 20px;
  padding-left: 2px;
  color: #666;
`;

const EventToolbar = styled.div`
  display: flex;
  align-items: center;
  gap: 1px;
  height: 20px;
  padding-left: 2px;
  background: #f5f5f5;
  border-bottom: 1px solid #d5d5d5;
`;

const ToolButton = styled.button`
  display: flex;
  align-items: center;
  gap: 2px;
  padding: 0 3px;
  font-size: ${({ $large }) => ($large ? '9px' : 'inherit')};
  i {
    font-size: 6px;
    margin-left: -1px;
  }
`;

const EventBody = styled.div`
  display: flex;
  flex: 1;
  min-height: 0;
`;

const Gutter = styled.div`
  display: flex;
  align-items: center;
  justify-content: center;
  width: 10px;
`;

const Splitter = styled.div`
  width: 5px;
  height: ${({ $height }) => $height}px;
  border: 1px solid #b4b4b4;
  background: repeating-linear-gradient(#bbb 0 1px, #fdfdfd 1px 3px) center / 1px 80% no-repeat #fdfdfd;
  align-self: center;
`;

const EventPanel = styled.section`
  display: flex;
  flex-direction: column;
  flex: 1;
  min-width: 0;
  margin: 5px 5px 4px 0;
  border: 1px solid #d5d5d5;
`;

const PanelHeader = styled.h2`
  margin: 0;
  height: 17px;
  padding-left: 6px;
  font-size: inherit;
  font-weight: 400;
  line-height: 17px;
  background: #e3e3e3;
  white-space: nowrap;
`;

const Details = styled.dl`
  display: grid;
  grid-template-columns: 83px 1fr;
  align-content: start;
  height: 88px;
  margin: 5px 5px 0;
  padding: 2px 12px;
  border: 1px solid #d5d5d5;
  font-size: 7px;
  dd {
    margin: 0;
  }
`;

const ViewTabs = styled.div`
  display: flex;
  align-items: center;
  gap: 4px;
  height: 24px;
  margin: 6px 4px 0;
  background: #f5f5f5;
  border-bottom: 2px solid #e2e2e2;
`;

const ViewTab = styled.button`
  display: flex;
  align-items: center;
  gap: 3px;
  height: 15px;
  padding: 0 4px 0 2px;
  background: ${({ $active }) => ($active ? '#c9c9c9' : 'none')};
`;

const FunctionRow = styled.div`
  display: flex;
  flex: 1;
  gap: 3px;
  min-height: 0;
  padding: 8px 8px 6px 6px;
`;

const FunctionCard = styled.div`
  display: flex;
  flex-direction: column;
  justify-content: space-between;
  width: 123px;
  padding: 4px 4px 0 5px;
  border: 1px solid #d0d0d0;
`;

const FunctionTable = styled.table`
  width: 100%;
  table-layout: fixed;
  border-spacing: 0;
  background: #f5f5f5;
  outline: 1px solid #dcdcdc;
  td, th {
    height: 13px;
    padding: 1px 10px 1px 2px;
    line-height: 10px;
    font-weight: 400;
    text-align: left;
  }
`;

const FunctionLabel = styled.th.attrs({ scope: 'row' })`
  width: 53px;
  color: ${({ $required }) => ($required ? '#e02424' : 'inherit')};
  background: ${({ $picked }) => ($picked ? '#e0e0e0' : 'none')};
`;

const PagerBar = styled.div`
  display: flex;
  align-items: center;
  gap: 6px;
  height: 13px;
  white-space: nowrap;
  span {
    margin: 0 2px;
  }
  button {
    font-size: 5px;
    color: ${({ $faint }) => ($faint ? '#bbb' : '#777')};
  }
`;

const PagerRow = styled.div`
  display: flex;
  gap: 36px;
  height: 13px;
  padding-left: 2px;
`;

const HScroll = styled.div`
  display: flex;
  justify-content: space-between;
  flex: 1;
  margin-right: ${({ $faint }) => ($faint ? '10px' : '0')};
  background: ${({ $faint }) => ($faint ? '#f5f5f5' : '#fdfdfd')};
  border: 1px solid ${({ $faint }) => ($faint ? '#e4e4e4' : '#b8b8b8')};
  button {
    width: 11px;
    font-size: 6px;
    line-height: 10px;
    color: ${({ $faint }) => ($faint ? '#bbb' : '#777')};
    background: #fdfdfd;
    border-right: 1px solid ${({ $faint }) => ($faint ? '#e4e4e4' : '#b8b8b8')};
  }
`;

const ToolColumn = styled.div`
  display: flex;
  flex-direction: column;
  flex-shrink: 0;
  align-items: center;
  width: 18px;
  padding: 1px 0;
  background: #f5f5f5;
`;

const IconButton = styled.button`
  display: flex;
  align-items: center;
  justify-content: center;
  width: 15px;
  height: 15px;
  margin-top: ${({ $line }) => ($line ? '3px' : '0')};
  background: ${({ $on }) => ($on ? '#c9c9c9' : 'none')};
  box-shadow: ${({ $line }) => ($line ? '0 -2px 0 -1px #dcdcdc' : 'none')};
`;

const PercentButton = styled(IconButton)`
  font-size: 10px;
`;

const TinyArrow = styled.span`
  font-size: 6px;
  line-height: 8px;
`;

const FoodTools = styled.div`
  display: flex;
  flex-direction: column;
  flex: 1;
  align-items: center;
  justify-content: flex-end;
  gap: 3px;
  padding-bottom: 3px;
`;

const Spacer = styled.div`
  flex: 1;
`;

const ItemsArea = styled.div`
  display: flex;
  flex-direction: column;
  flex: 1;
  min-width: 0;
  margin: 0 0 2px 2px;
`;

const ItemTabs = styled.div`
  display: flex;
  height: 21px;
`;

const ItemTab = styled.button`
  padding: 0 5px;
  border: 1px solid #cdcdcd;
  border-bottom: 0;
  background: ${({ $active }) => ($active ? '#fdfdfd' : '#f3f3f3')};
  text-decoration: ${({ $active }) => ($active ? 'underline' : 'none')};
`;

const ItemsFrame = styled.div`
  display: flex;
  flex: 1;
  gap: 6px;
  min-height: 0;
  padding: 3px;
  border: 1px solid #b8b8b8;
`;

const ItemsMain = styled.div`
  display: flex;
  flex-direction: column;
  flex: 1;
  min-width: 0;
  gap: 4px;
`;

const GridBox = styled.div`
  flex: 1;
  border: 1px solid #b4b4b4;
`;

const DataTable = styled.table`
  width: 100%;
  table-layout: fixed;
  border-collapse: collapse;
  td, th {
    padding: 0 1px;
    border: 1px solid #dcdcdc;
    border-top: 0;
    font-weight: 400;
    line-height: 11px;
    white-space: nowrap;
    overflow: hidden;
    text-overflow: clip;
  }
  th {
    text-align: left;
    height: 17px;
    padding: 0 4px;
    border-color: #bcbcbc;
  }
  td:first-child, th:first-child {
    padding: 0;
    font-size: 6px;
    text-align: center;
  }
  tbody tr:nth-child(odd) {
    background: #f5f5f5;
  }
`;

const ItemsTable = styled(DataTable)`
  tbody td {
    height: 14px;
  }
  th:nth-child(3), th:nth-child(4), th:nth-child(6), th:nth-child(10) {
    text-align: center;
  }
  th:nth-child(7) {
    color: #999;
  }
  th:nth-child(10) {
    padding: 0 2px;
  }
  svg {
    vertical-align: middle;
  }
`;

const NameCell = styled.td`
  outline: ${({ $current }) => ($current ? '1px solid #333' : 'none')};
  outline-offset: -1px;
`;

const Star = styled.span`
  color: #f09a3a;
  font-size: 7px;
`;

const NotesRow = styled.div`
  display: flex;
  align-items: center;
  gap: 2px;
  height: 34px;
  padding: 0 4px 0 3px;
  border: 1px solid #d8d8d8;
`;

const NoteBox = styled.textarea`
  height: 24px;
  flex: ${({ $side }) => ($side ? 2 : 5)};
  resize: none;
  background: ${({ $side }) => ($side ? '#efefef' : '#ececec')};
  border: 1px solid ${({ $side }) => ($side ? '#efefef' : '#b4b4b4')};
`;

const Spinner = styled.div`
  display: flex;
  flex-direction: column;
  justify-content: space-between;
  height: 22px;
`;

const FooterTools = styled.div`
  display: flex;
  align-items: center;
  height: 22px;
  padding: 0 2px;
  background: #f5f5f5;
  border-bottom: 2px solid #e6e6e6;
`;

const ToolDivider = styled.span`
  width: 1px;
  height: 18px;
  margin: 0 2px 0 1px;
  background: #dcdcdc;
`;

const SearchFrame = styled.div`
  position: absolute;
  top: 0;
  left: 847px;
  right: 0;
  height: 376px;
  display: flex;
  flex-direction: column;
  border: 1px solid #c0c0c0;
  border-right: 0;
  border-bottom: 2px solid #dedede;
  background: #fdfdfd;
`;

const SearchTitle = styled.div`
  height: 24px;
  padding: 3px 0 0 11px;
  color: #666;
`;

const SearchBody = styled.div`
  display: flex;
  flex: 1;
  gap: 9px;
  min-height: 0;
  padding: 0 0 4px 5px;
`;

const SearchLeft = styled.div`
  display: flex;
  flex-direction: column;
  width: 229px;
`;

const CriteriaBar = styled.div`
  display: flex;
  align-items: center;
  justify-content: space-between;
  height: 20px;
  margin: 1px 0;
  padding: 0 1px 0 13px;
  background: #f5f5f5;
`;

const HideButton = styled.button`
  display: flex;
  align-items: center;
  justify-content: center;
  gap: 4px;
  width: 70px;
  height: 15px;
  background: #cbcbcb;
`;

const CriteriaRow = styled.div`
  display: flex;
  gap: 4px;
  flex: 1;
  min-height: 0;
`;

const FieldsPanel = styled.section`
  display: flex;
  flex-direction: column;
  width: 136px;
  border: 1px solid #d5d5d5;
`;

const FieldsScroll = styled.div`
  display: flex;
  height: 250px;
  margin: 6px 6px 0 11px;
`;

const FieldsClip = styled.div`
  flex: 1;
  overflow: hidden;
`;

const FieldsTable = styled.table`
  width: 100%;
  height: 256px;
  table-layout: fixed;
  border-collapse: collapse;
  td, th {
    padding: 0 1px 0 15px;
    line-height: 10px;
    text-align: left;
    white-space: nowrap;
    overflow: hidden;
  }
  th {
    padding-left: 3px;
  }
  td + td {
    padding: 0 0 0 1px;
    border: 1px solid #ececec;
  }
`;

const FieldRow = styled.tr`
  background: ${({ $picked }) => ($picked ? '#e3e3e3' : 'none')};
  td + td {
    background: #fdfdfd;
    outline: ${({ $picked }) => ($picked ? '1px dashed #444' : 'none')};
    outline-offset: -1px;
  }
`;

const CheckLine = styled.label`
  display: flex;
  align-items: center;
  gap: 4px;
  flex: 1;
  margin: 3px 6px 0 7px;
  border-top: 1px solid #b8b8b8;
  white-space: nowrap;
`;

const CheckBox = styled.input`
  appearance: none;
  display: inline-grid;
  place-content: center;
  width: 11px;
  height: 11px;
  border: 1px solid ${({ $pale }) => ($pale ? '#e4e4e4' : '#b4b4b4')};
  background: #fff;
  flex-shrink: 0;
  vertical-align: middle;
  &:checked::before {
    content: '✓';
    font-size: 8px;
    line-height: 8px;
    color: #555;
  }
`;

const Radio = styled.input`
  appearance: none;
  display: inline-grid;
  place-content: center;
  width: 11px;
  height: 11px;
  border: 1px solid #a8a8a8;
  border-radius: 50%;
  flex-shrink: 0;
  &:checked::before {
    content: '';
    width: 5px;
    height: 5px;
    border-radius: 50%;
    background: #555;
  }
`;

const RulesColumn = styled.div`
  display: flex;
  flex-direction: column;
  flex: 1;
  min-width: 0;
  gap: 3px;
`;

const RulePanel = styled.section`
  height: ${({ $height }) => ($height ? `${$height}px` : 'auto')};
  flex: ${({ $height }) => ($height ? '0 0 auto' : '1')};
  border: 1px solid #d5d5d5;
`;

const RuleList = styled.div`
  display: flex;
  flex-direction: column;
  padding: 7px 6px 0 7px;
  hr {
    width: 100%;
    margin: 5px 0;
    border: 0;
    border-top: 1px solid #b0b0b0;
  }
`;

const RuleLabel = styled.label`
  display: flex;
  align-items: center;
  gap: 3px;
  height: 13px;
  margin-bottom: ${({ $dark }) => ($dark ? '4px' : '0')};
  color: ${({ $dark }) => ($dark ? '#222' : 'inherit')};
  white-space: nowrap;
`;

const PrefixInput = styled.input`
  width: 100%;
  height: 13px;
  padding-left: 1px;
  border: 1px solid #e8e8e8;
`;

const SearchButtons = styled.div`
  display: flex;
  margin: 4px 1px 0 0;
`;

const PushButton = styled.button`
  width: ${({ $width, $joined }) => ($joined ? $width + 1 : $width)}px;
  height: 16px;
  margin-left: ${({ $joined }) => ($joined ? '-1px' : '0')};
  border: 1px solid #b0b0b0;
  background: #fdfdfd;
`;

const Triangle = styled.span`
  color: #1c80b8;
  font-size: 9px;
`;

const Results = styled.section`
  flex: 1;
  min-width: 0;
  border: 1px solid #dcdcdc;
  border-right: 0;
`;

const ResultsBox = styled.div`
  margin: 6px 0 0 6px;
  border: 1px solid #b4b4b4;
  border-right: 0;
  height: 315px;
`;

const ResultsTable = styled(DataTable)`
  height: 300px;
  th {
    height: 18px;
  }
`;

const ResultRow = styled.tr`
  && {
    ${({ $picked }) => $picked && 'background: #cde6f2;'}
  }
  outline: ${({ $picked }) => ($picked ? '1px solid #8fa9b5' : 'none')};
  outline-offset: -1px;
`;

const DialogFrame = styled.div`
  position: absolute;
  top: 0;
  left: 451px;
  width: 424px;
  height: 328px;
  display: flex;
  flex-direction: column;
  border: 1px solid #4a87ad;
  background: #fdfdfd;
`;

const DialogTitle = styled.div`
  display: flex;
  align-items: center;
  gap: 4px;
  height: 19px;
  padding: 0 10px 2px 2px;
  span {
    flex: 1;
  }
  button {
    display: flex;
  }
`;

const DialogTools = styled.div`
  display: flex;
  align-items: center;
  gap: 4px;
  height: 19px;
  padding: 0 1px 0 2px;
  background: #f5f5f5;
  label {
    margin-left: 3px;
  }
  > input {
    width: 80px;
    height: 15px;
    border: 1px solid #b4b4b4;
    background: #fff;
  }
`;

const Dot = styled.span`
  width: 9px;
  height: 9px;
  border-radius: 50%;
  background: #777;
`;

const DialogBody = styled.div`
  display: flex;
  height: 262px;
  margin-top: 2px;
  padding: 0 6px 0 1px;
`;

const MenuTree = styled.div`
  flex-shrink: 0;
  width: 97px;
  padding: 2px 1px 0 5px;
  border: 1px solid #d5d5d5;
`;

const TreeRow = styled.div`
  display: flex;
  align-items: center;
  margin-bottom: 1px;
  line-height: 10px;
  i {
    width: 9px;
    font-size: 10px;
  }
`;

const TreeLabel = styled.span`
  flex: 1;
  padding: 1px 0;
  background: ${({ $picked }) => ($picked ? '#e0e0e0' : 'none')};
`;

const MenuGrid = styled.div`
  flex: 1;
  min-width: 0;
  height: 259px;
  margin: 1px 1px 0 7px;
  border: 1px solid #b4b4b4;
`;

const MenuScroll = styled.div`
  display: flex;
  height: 245px;
`;

const MenuRows = styled.div`
  flex: 1;
  min-width: 0;
`;

const MenuTable = styled(DataTable)`
  height: 245px;
  th {
    height: 18px;
  }
  td {
    border-right: 0;
  }
  td:nth-child(2) {
    padding-left: 9px;
  }
  td:nth-child(3) {
    border-left: 0;
  }
  th:nth-child(3) {
    text-align: center;
  }
`;

const RedHead = styled.th`
  && {
    padding: 0 8px 0 3px;
    color: #d92020;
  }
  small {
    float: right;
    color: #999;
    font-size: 7px;
  }
`;

const MenuRow = styled.tr`
  td + td {
    border-top: ${({ $focused }) => ($focused ? '1px dashed #555' : '0')};
    border-bottom: ${({ $focused }) => ($focused ? '1px dashed #555' : '1px solid #dcdcdc')};
  }
`;

const DialogFooter = styled.div`
  display: flex;
  align-items: center;
  gap: 4px;
  flex: 1;
  padding: 0 1px 0 2px;
`;

const FooterStrip = styled.div`
  flex: 1;
  height: 16px;
  background: #f5f5f5;
`;

const Pointer = styled.svg`
  position: absolute;
  top: 262px;
  left: 842px;
`;

const TaskbarWrapper = styled.footer`
  display: flex;
  height: 27px;
  background: linear-gradient(90deg, #1d282e 0, #24333b 10%, #454545 17%, #444 100%);
  color: #eee;
`;

const TaskButton = styled.button`
  display: flex;
  align-items: center;
  justify-content: center;
  width: 32px;
  margin-right: 1px;
  background: ${({ $current }) => ($current ? '#737373' : 'none')};
  border-bottom: 2px solid ${({ $open }) => ($open ? '#76b9ed' : 'transparent')};
`;

const Clock = styled.div`
  display: flex;
  flex-direction: column;
  margin-left: auto;
  padding: 1px 4px 0 0;
  text-align: center;
`;
